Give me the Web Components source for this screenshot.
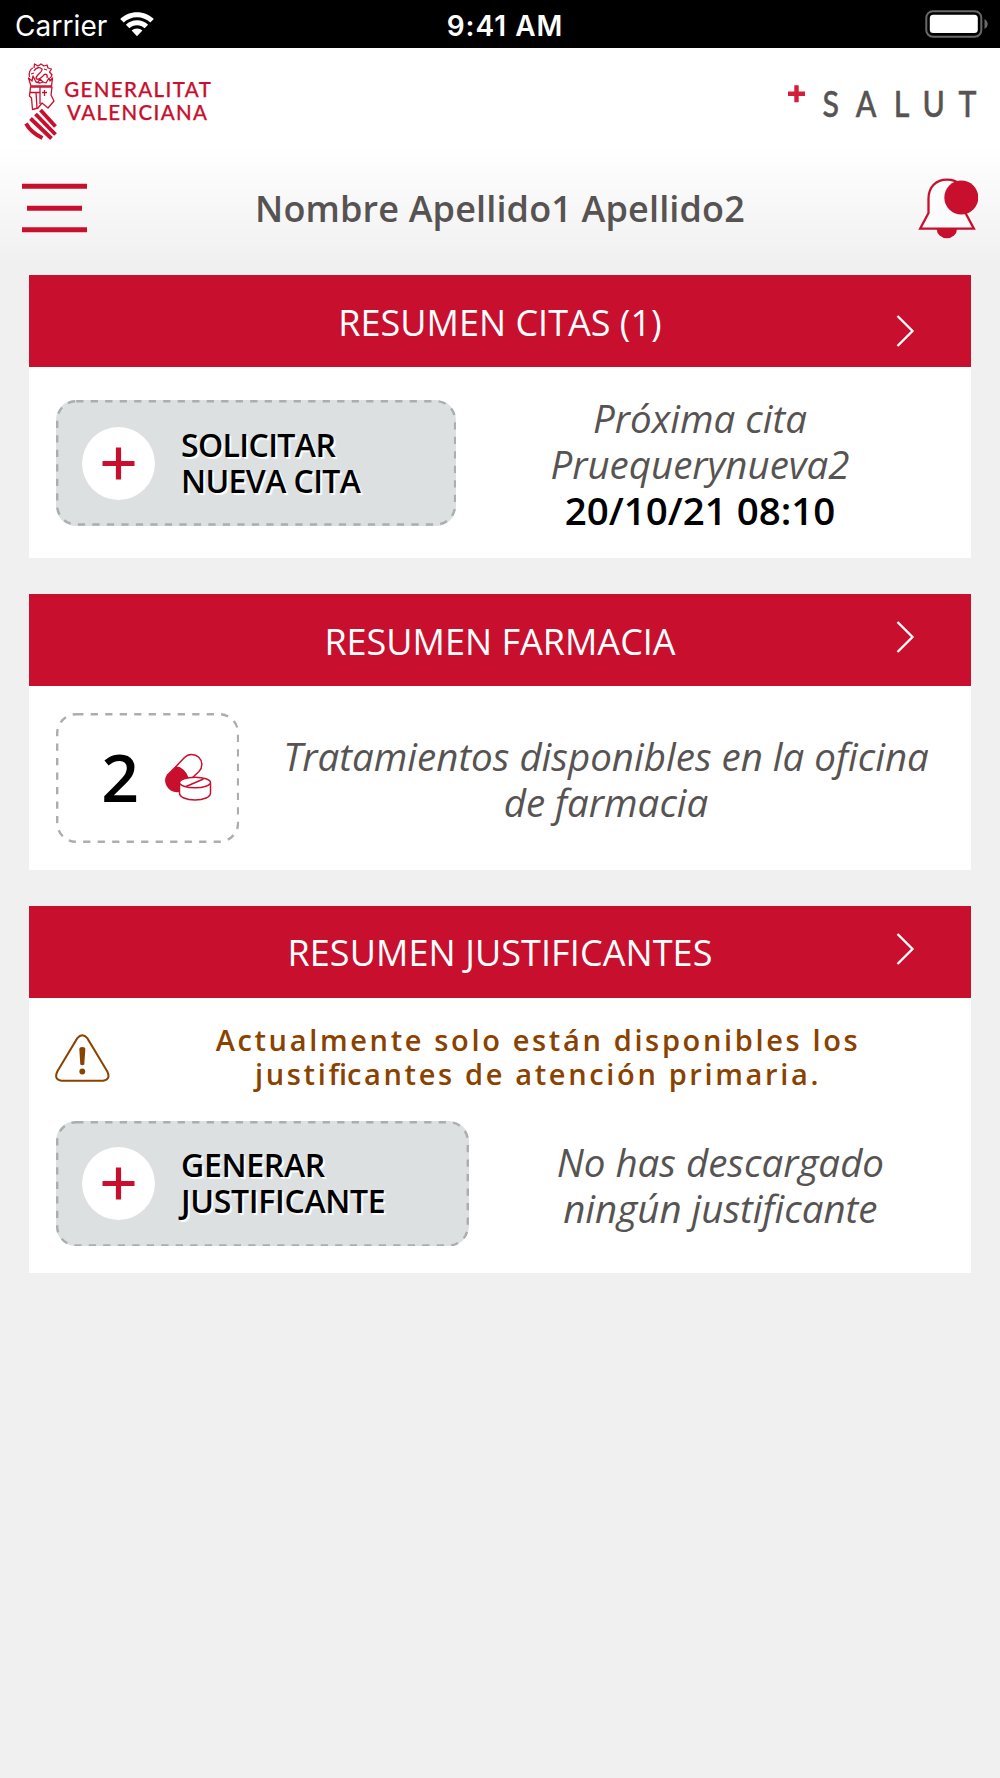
<!DOCTYPE html>
<html lang="es">
<head>
<meta charset="utf-8">
<title>GVA + Salut</title>
<style>
  html, body {
    margin: 0;
    padding: 0;
  }
  body {
    width: 1000px;
    min-height: 1778px;
    background-color: #f0f0f0;
    font-family: "Open Sans", "Noto Sans", sans-serif;
    color: #575352;
  }
</style>
</head>
<body>
<salut-app>
  <status-bar carrier="Carrier" time="9:41 AM"></status-bar>
  <app-header>Nombre Apellido1 Apellido2</app-header>
  <summary-card class="citas" heading="RESUMEN CITAS (1)">
    <action-button style="--w: 400.3px; --tracking: -0.6px">SOLICITAR<br>NUEVA CITA</action-button>
    <info-text style="--right: 0px; --top: 1px">Próxima cita<br>Pruequerynueva2<br><b>20/10/21 08:10</b></info-text>
  </summary-card>
  <summary-card class="farmacia" heading="RESUMEN FARMACIA">
    <pill-counter>2</pill-counter>
    <info-text style="--right: -29px; --top: 3px">Tratamientos disponibles en la oficina<br>de farmacia</info-text>
  </summary-card>
  <summary-card class="justificantes" heading="RESUMEN JUSTIFICANTES">
    <warning-note slot="notice">Actualmente solo están disponibles los<br>justi<span style="letter-spacing: 0">fi</span>cantes de atención primaria.</warning-note>
    <action-button style="--w: 413px; --tracking: -0.3px">GENERAR<br>JUSTIFICANTE</action-button>
    <info-text style="--right: -28px; --top: 3px">No has descargado<br>ningún justificante</info-text>
  </summary-card>
</salut-app>

<script>
customElements.define("salut-app", class extends HTMLElement {
  constructor() {
    super();
    this.shadow = this.attachShadow({ mode: "open" });
  }

  connectedCallback() {
    this.shadow.innerHTML = `
      <style>
        :host {
          display: flex;
          flex-direction: column;
          width: 1000px;
        }
      </style>
      <slot></slot>
    `;
  }
});

customElements.define("status-bar", class extends HTMLElement {
  constructor() {
    super();
    this.shadow = this.attachShadow({ mode: "open" });
  }

  connectedCallback() {
    this.renderHTML();
  }

  renderStyle() {
    return `
      <style>
        :host {
          box-sizing: border-box;
          display: grid;
          grid-template-columns: 1fr auto 1fr;
          align-items: center;
          height: 48.4px;
          padding: 3px 12px 0 15px;
          background-color: #000;
          color: #fff;
          font-family: Inter, "Liberation Sans", sans-serif;
          font-size: 28px;
          line-height: 34px;
        }
        .left {
          display: flex;
          align-items: center;
          gap: 13px;
        }
        .carrier {
          font-size: 28px;
          font-weight: 400;
          letter-spacing: 0.100px;
        }
        .time {
          margin-left: 7px;
          font-weight: 600;
          letter-spacing: 1px;
        }
        .battery {
          justify-self: end;
        }
        svg {
          display: block;
          margin-top: -3px;
        }
      </style>
    `;
  }

  renderHTML() {
    this.shadow.innerHTML = `
      ${this.renderStyle()}
      <div class="left">
        <span class="carrier">${this.getAttribute("carrier")}</span>
        <svg width="34" height="25" viewBox="0 0 34 25" fill="#fff">
          <path d="M17 .2C23.500 .2 29.500 2.700 33.800 7L30.300 10.600C26.800 7.200 22 5.200 17 5.200S7.200 7.200 3.700 10.600L.2 7C4.500 2.700 10.500 .2 17 .2Z"/>
          <path d="M17 8.300C21.300 8.300 25.200 10 28.100 12.800L24.600 16.300C22.600 14.400 19.900 13.200 17 13.200S11.400 14.400 9.400 16.300L5.900 12.800C8.800 10 12.700 8.300 17 8.300Z"/>
          <path d="M17 16.400C19.100 16.400 21 17.200 22.400 18.500L17 24.200L11.600 18.500C13 17.200 14.900 16.400 17 16.400Z"/>
        </svg>
      </div>
      <span class="time">${this.getAttribute("time")}</span>
      <svg class="battery" width="63" height="28" viewBox="0 0 63 28">
        <rect x="1.300" y="1.200" width="55" height="25.500" rx="6.500" fill="none" stroke="#696969" stroke-width="2"/>
        <rect x="4.800" y="4.800" width="48" height="18.300" rx="3.500" fill="#fff"/>
        <path d="M59.500 9V19C61.500 18 62.700 16 62.700 14S61.500 10 59.500 9Z" fill="#696969"/>
      </svg>
    `;
  }
});

customElements.define("app-header", class extends HTMLElement {
  constructor() {
    super();
    this.shadow = this.attachShadow({ mode: "open" });
  }

  connectedCallback() {
    this.renderHTML();
  }

  renderStyle() {
    return `
      <style>
        :host {
          box-sizing: border-box;
          display: flex;
          flex-direction: column;
          height: 226.900px;
          background: linear-gradient(#fff 98px, #f0f0f0 218px);
        }
        .brand {
          display: flex;
          justify-content: space-between;
          padding: 11.600px 22px 0 22px;
          height: 90px;
        }
        .user {
          display: grid;
          grid-template-columns: 65px 1fr 65px;
          align-items: center;
          padding: 0 22px;
          margin-top: 27px;
          height: 64px;
        }
        h1 {
          margin: 0;
          text-align: center;
          font-size: 36px;
          line-height: 50px;
          font-weight: 600;
          letter-spacing: 0.150px;
        }
        svg {
          display: block;
        }
        .menu {
          margin-top: -1.500px;
        }
        .bell {
          justify-self: end;
        }
      </style>
    `;
  }

  renderGeneralitat() {
    return `
      <svg width="200" height="90" viewBox="22 60 200 90">
        <g fill="none" stroke="#c8102e" stroke-width="1.300" stroke-linejoin="round">
          <path d="M31 86L28.500 78L32 81L33 76L36 82L40 83L43 82L46 83L49 78L50 81L52.500 78L51.500 86Z"/>
          <path d="M29.500 77C28.500 73 30 69 33 68M34 68L34.500 64L38 66L41 64L44 66L47 65L48 68L51.500 69L49.500 72L52 75L50.500 78"/>
          <path d="M34 71C36 67 40 67 42 69C43 72 36 75 36 78C37 81 41 78 43 76C45 73 48 74 47 78M44 69L47 70M31 74L34 73M38 82L40 79L43 82"/>
          <path d="M30.500 87H52L51 95L54 101L48 108L42 103L38 108L32.500 109.500L31.500 98L29.500 96Z"/>
          <path d="M30 92.500H40M36 92.500L37 108M40 87V104M42 92.500H47M44.500 90V96"/>
        </g>
        <g fill="none" stroke="#c8102e" stroke-width="3.900">
          <path d="M40.500 110L55.500 126.500"/>
          <path d="M35.500 114L55.500 134.500"/>
          <path d="M30.500 118.500L51.500 138.500"/>
          <path d="M26 123.500C29 129 35 134.500 42.500 138"/>
        </g>
        <g fill="#c8102e" stroke="#c8102e" stroke-width=".25" font-family="Lato, sans-serif" font-size="20.500" font-weight="500">
          <text x="64.300" y="97" textLength="146.500" lengthAdjust="spacing">GENERALITAT</text>
          <text x="67" y="119.600" textLength="140" lengthAdjust="spacing">VALENCIANA</text>
        </g>
      </svg>
    `;
  }

  renderSalut() {
    return `
      <svg width="192" height="70" viewBox="786 60 192 70">
        <path d="M794.300 85.300H798.700V91.600H805V96H798.700V102.300H794.300V96H788V91.600H794.300Z" fill="#d31f3a"/>
        <g transform="scale(.82 1)" fill="#575352" stroke="#575352" stroke-width=".5">
          <text x="1003 1043.500 1090 1125 1169" y="117.200" font-family="Lato, sans-serif" font-size="37" font-weight="500">SALUT</text>
        </g>
      </svg>
    `;
  }

  renderHTML() {
    this.shadow.innerHTML = `
      ${this.renderStyle()}
      <div class="brand">
        ${this.renderGeneralitat()}
        ${this.renderSalut()}
      </div>
      <div class="user">
        <svg class="menu" width="65" height="50" viewBox="0 0 65 50" stroke="#c8102e" stroke-width="5">
          <path d="M0 3.200H65M5 25.200H60M0 46.800H65"/>
        </svg>
        <h1><slot></slot></h1>
        <svg class="bell" width="62" height="62" viewBox="916 178.500 62 62">
          <path d="M920.100 229.200L928.500 213.500V199C928.500 187.500 936 180.100 947 180.100S965.500 187.500 965.500 199V213.500L973.900 229.200Z" fill="#fff" fill-opacity=".5" stroke="#c8102e" stroke-width="2.300"/>
          <path d="M936.700 229.500H957A10.150 9.200 0 0 1 936.700 229.500Z" fill="#c8102e"/>
          <circle cx="961.300" cy="198" r="17" fill="#c8102e"/>
        </svg>
      </div>
    `;
  }
});

customElements.define("summary-card", class extends HTMLElement {
  constructor() {
    super();
    this.shadow = this.attachShadow({ mode: "open" });
  }

  static get observedAttributes() {
    return ["heading"];
  }

  attributeChangedCallback(attrName, oldVal, newVal) {
    this.renderHTML();
  }

  connectedCallback() {
    this.renderHTML();
  }

  renderStyle() {
    return `
      <style>
        :host {
          box-sizing: border-box;
          display: flex;
          flex-direction: column;
          margin: 0 29px 36.600px;
          height: 282.400px;
          background-color: #fff;
          --chevron-top: -6px;
        }
        :host(.citas) {
          --chevron-top: 20px;
        }
        :host(.farmacia) {
          height: 275.300px;
        }
        :host(.justificantes) {
          height: 366.900px;
        }
        header {
          box-sizing: border-box;
          display: grid;
          grid-template-columns: 86px 1fr 86px;
          align-items: center;
          height: 91.700px;
          background-color: #c8102e;
          color: #fff;
        }
        h2 {
          grid-column: 2;
          margin: 3px 0 0;
          text-align: center;
          font-size: 36px;
          line-height: 50px;
          font-weight: 400;
        }
        :host(.justificantes) h2 {
          margin-top: 2.400px;
          letter-spacing: 0.080px;
        }
        header svg {
          display: block;
          margin: var(--chevron-top) 0 0 11px;
        }
        .content {
          display: flex;
          align-items: center;
          flex: 1;
          padding: 0 27px 0 26.700px;
        }
        :host(.citas) .content {
          padding-top: 2px;
        }
        :host(.justificantes) .content {
          flex: none;
          height: 126px;
        }
      </style>
    `;
  }

  renderHTML() {
    this.shadow.innerHTML = `
      ${this.renderStyle()}
      <header>
        <h2>${this.getAttribute("heading")}</h2>
        <svg width="20" height="34" viewBox="0 0 20 34" fill="none" stroke="#fff" stroke-width="2.300">
          <path d="M1.500 2L16.500 17L1.500 32"/>
        </svg>
      </header>
      <slot name="notice"></slot>
      <div class="content"><slot></slot></div>
    `;
  }
});

customElements.define("action-button", class extends HTMLElement {
  constructor() {
    super();
    this.shadow = this.attachShadow({ mode: "open" });
  }

  connectedCallback() {
    this.renderHTML();
  }

  renderStyle() {
    return `
      <style>
        :host {
          box-sizing: border-box;
          position: relative;
          display: flex;
          align-items: center;
          flex: none;
          gap: 26px;
          width: var(--w);
          height: 125.700px;
          padding-left: 26.300px;
          border-radius: 20px;
          background-color: #dde0e1;
          color: #000;
        }
        .frame {
          position: absolute;
          inset: 0;
          width: 100%;
          height: 100%;
        }
        .plus {
          flex: none;
        }
        .label {
          font-size: 32px;
          line-height: 36.300px;
          font-weight: 600;
          letter-spacing: var(--tracking);
          white-space: nowrap;
          text-shadow: 2px 2px 1px #fff;
        }
      </style>
    `;
  }

  renderHTML() {
    this.shadow.innerHTML = `
      ${this.renderStyle()}
      <svg class="frame">
        <rect x="1.200" y="1.200" rx="19" style="width: calc(100% - 2.400px); height: calc(100% - 2.400px)" fill="none" stroke="#a9aeb1" stroke-width="2.400" stroke-dasharray="7.250 7.250"/>
      </svg>
      <svg class="plus" width="73" height="73" viewBox="0 0 73 73">
        <circle cx="36.500" cy="36.500" r="36.400" fill="#fff"/>
        <path d="M20.500 36.500H52.500M36.500 20.500V52.500" stroke="#c8102e" stroke-width="5.200"/>
      </svg>
      <span class="label"><slot></slot></span>
    `;
  }
});

customElements.define("info-text", class extends HTMLElement {
  constructor() {
    super();
    this.shadow = this.attachShadow({ mode: "open" });
  }

  connectedCallback() {
    this.shadow.innerHTML = `
      <style>
        :host {
          display: block;
          flex: 1;
          margin: var(--top) var(--right) 0 0;
          text-align: center;
          font-size: 38.500px;
          line-height: 46px;
          font-style: italic;
          white-space: nowrap;
        }
        ::slotted(b) {
          color: #000;
          font-style: normal;
          font-weight: 600;
        }
      </style>
      <slot></slot>
    `;
  }
});

customElements.define("pill-counter", class extends HTMLElement {
  constructor() {
    super();
    this.shadow = this.attachShadow({ mode: "open" });
  }

  connectedCallback() {
    this.renderHTML();
  }

  renderStyle() {
    return `
      <style>
        :host {
          box-sizing: border-box;
          position: relative;
          display: flex;
          align-items: center;
          flex: none;
          gap: 24px;
          width: 183.300px;
          height: 130px;
          padding: 0 0 4px 45.500px;
          color: #000;
          font-size: 66px;
          line-height: 80px;
          font-weight: 600;
        }
        .frame {
          position: absolute;
          inset: 0;
          width: 100%;
          height: 100%;
        }
      </style>
    `;
  }

  renderHTML() {
    this.shadow.innerHTML = `
      ${this.renderStyle()}
      <svg class="frame">
        <rect x="1.200" y="1.200" rx="19" style="width: calc(100% - 2.400px); height: calc(100% - 2.400px)" fill="none" stroke="#a9aeb1" stroke-width="2.400" stroke-dasharray="7.250 7.250"/>
      </svg>
      <slot></slot>
      <svg width="50" height="50" viewBox="163 751 50 50" fill="none" stroke="#c8102e" stroke-width="1.500">
        <path d="M175.500 767L167.500 775A11 11 0 0 0 178 791.500C183 791.500 187 781 188 778C186 772 181 767 175.500 767Z" fill="#c8102e"/>
        <path d="M175.500 767L184.500 757.500A10 10 0 0 1 199 771.500L191.500 778.500"/>
        <path d="M179.500 783V793C179.500 797 186 800 195 800S210.500 797 210.500 793V783" fill="#fff"/>
        <ellipse cx="195" cy="782.500" rx="15.500" ry="5.300" fill="#fff"/>
        <path d="M186 786.500L203.500 779"/>
      </svg>
    `;
  }
});

customElements.define("warning-note", class extends HTMLElement {
  constructor() {
    super();
    this.shadow = this.attachShadow({ mode: "open" });
  }

  connectedCallback() {
    this.renderHTML();
  }

  renderStyle() {
    return `
      <style>
        :host {
          box-sizing: border-box;
          display: flex;
          align-items: center;
          height: 122.600px;
          padding: 0 5px 0 26px;
          color: #8a4200;
        }
        svg {
          flex: none;
        }
        .text {
          flex: 1;
          margin-top: -4px;
          text-align: center;
          font-size: 29px;
          line-height: 34px;
          font-weight: 600;
          letter-spacing: 2.650px;
          white-space: nowrap;
        }
      </style>
    `;
  }

  renderHTML() {
    this.shadow.innerHTML = `
      ${this.renderStyle()}
      <svg width="55" height="50" viewBox="0 0 55 50" fill="none" stroke="#8a4200" stroke-width="2">
        <path d="M22.300 4.200Q27.300 -1.500 32.300 4.200L52.300 37.500Q56 45.700 48 46.700H6.600Q-1.400 45.700 2.300 37.500Z"/>
        <path d="M24.300 15Q24.300 13 27.300 13T30.300 15L29.300 30.500Q27.300 32 25.300 30.500Z" fill="#8a4200" stroke="none"/>
        <circle cx="27.300" cy="37.500" r="2.900" fill="#8a4200" stroke="none"/>
      </svg>
      <div class="text"><slot></slot></div>
    `;
  }
});
</script>
</body>
</html>
